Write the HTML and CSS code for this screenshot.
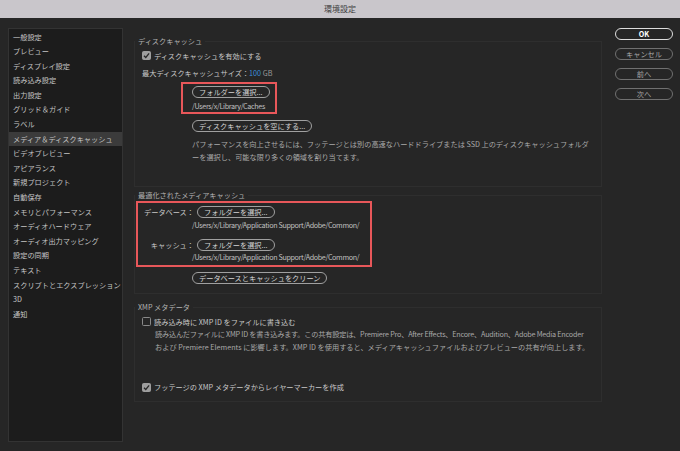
FILE: index.html
```html
<!DOCTYPE html>
<html lang="ja">
<head>
  <meta charset="UTF-8" />
  <title>環境設定</title>
  <link rel="stylesheet" href="styles.css">
</head>
<body>
  <div class="titlebar">環境設定</div>
  <div class="window">
    <ul class="sidebar">
      <li>一般設定</li>
      <li>プレビュー</li>
      <li>ディスプレイ設定</li>
      <li>読み込み設定</li>
      <li>出力設定</li>
      <li>グリッド＆ガイド</li>
      <li>ラベル</li>
      <li class="active">メディア＆ディスクキャッシュ</li>
      <li>ビデオプレビュー</li>
      <li>アピアランス</li>
      <li>新規プロジェクト</li>
      <li>自動保存</li>
      <li>メモリとパフォーマンス</li>
      <li>オーディオハードウェア</li>
      <li>オーディオ出力マッピング</li>
      <li>設定の同期</li>
      <li>テキスト</li>
      <li>スクリプトとエクスプレッション</li>
      <li>3D</li>
      <li>通知</li>
    </ul>

    <div class="main">
      <fieldset class="group disk">
        <legend>ディスクキャッシュ</legend>
        <label class="check-row">
          <span class="box checked"><svg viewBox="0 0 10 10" width="9" height="9"><path d="M2.2 5.2 L4.2 7.2 L7.9 2.6" fill="none" stroke="#262626" stroke-width="1.4"/></svg></span>
          ディスクキャッシュを有効にする
        </label>
        <div class="size-row">最大ディスクキャッシュサイズ：<span class="value">100</span> <span class="unit">GB</span></div>
        <div class="mark disk-mark">
          <button class="pill">フォルダーを選択...</button>
          <div class="path">/Users/x/Library/Caches</div>
        </div>
        <button class="pill indent empty">ディスクキャッシュを空にする...</button>
        <p class="note indent">パフォーマンスを向上させるには、フッテージとは別の高速なハードドライブまたは SSD 上のディスクキャッシュフォルダ<br>ーを選択し、可能な限り多くの領域を割り当てます。</p>
      </fieldset>

      <fieldset class="group media">
        <legend>最適化されたメディアキャッシュ</legend>
        <div class="mark media-mark">
          <div class="field">
            <span class="field-label">データベース：</span>
            <button class="pill">フォルダーを選択...</button>
          </div>
          <div class="path">/Users/x/Library/Application Support/Adobe/Common/</div>
          <div class="field second">
            <span class="field-label">キャッシュ：</span>
            <button class="pill">フォルダーを選択...</button>
          </div>
          <div class="path">/Users/x/Library/Application Support/Adobe/Common/</div>
        </div>
        <button class="pill clean">データベースとキャッシュをクリーン</button>
      </fieldset>

      <fieldset class="group xmp">
        <legend>XMP メタデータ</legend>
        <label class="check-row">
          <span class="box"></span>
          読み込み時に XMP ID をファイルに書き込む
        </label>
        <p class="note xmp-note">読み込んだファイルに XMP ID を書き込みます。この共有設定は、Premiere Pro、After Effects、Encore、Audition、Adobe Media Encoder<br>および Premiere Elements に影響します。XMP ID を使用すると、メディアキャッシュファイルおよびプレビューの共有が向上します。</p>
        <label class="check-row last">
          <span class="box checked"><svg viewBox="0 0 10 10" width="9" height="9"><path d="M2.2 5.2 L4.2 7.2 L7.9 2.6" fill="none" stroke="#262626" stroke-width="1.4"/></svg></span>
          フッテージの XMP メタデータからレイヤーマーカーを作成
        </label>
      </fieldset>
    </div>

    <div class="actions">
      <button class="pill action primary">OK</button>
      <button class="pill action">キャンセル</button>
      <button class="pill action">前へ</button>
      <button class="pill action">次へ</button>
    </div>
  </div>
</body>
</html>
```

FILE: styles.css
```css
body {
  margin: 0;
  background: #262626;
  font-family: "Noto Sans CJK JP", "Noto Sans", sans-serif;
  font-size: 7.2px;
  color: #c8c8c8;
  height: 451px;
  overflow: hidden;
}
.titlebar {
  height: 18px;
  line-height: 18px;
  background: #c9c6cb;
  color: #3e3e3e;
  text-align: center;
  font-size: 8px;
}
.window {
  display: flex;
  padding: 10px 7px 0 8px;
}
.sidebar {
  list-style: none;
  margin: 0;
  padding: 0.5px 0 0;
  width: 115px;
  height: 414px;
  box-sizing: border-box;
  background: #1c1c1c;
  border: 1px solid #333;
}
.sidebar li {
  height: 14.6px;
  line-height: 14.6px;
  padding-left: 4px;
  color: #c4c4c4;
  white-space: nowrap;
}
.sidebar li.active {
  background: #3b3b3b;
}
.main {
  width: 468px;
  margin-left: 11px;
}
.actions {
  width: 58px;
  margin-left: 13px;
  display: flex;
  flex-direction: column;
  gap: 8px;
}

/* groups */
.group {
  margin: 0;
  padding: 0;
  min-width: 0;
  border: 1px solid #2e2e2e;
}
.group legend {
  margin-left: 0;
  padding: 0 3px;
  height: 10px;
  line-height: 10px;
  color: #b2b2b2;
}
.disk { margin-top: 8px; padding-bottom: 22px; }
.media { margin-top: 3.5px; padding-bottom: 9px; }
.xmp { margin-top: 8px; padding-bottom: 8px; }

.check-row {
  display: flex;
  align-items: center;
  gap: 3px;
  height: 12px;
  margin: 3.5px 0 0 7px;
  color: #c8c8c8;
}
.xmp .check-row.last { margin-top: 28px; }
.box {
  width: 9px;
  height: 9px;
  box-sizing: border-box;
  border: 1px solid #8a8a8a;
  border-radius: 1.5px;
  display: flex;
}
.box.checked {
  background: #9e9e9e;
  border-color: #9e9e9e;
}
.box svg { margin: -1px; }
.size-row {
  height: 12px;
  line-height: 12px;
  margin: 5.5px 0 0 7px;
}
.value { color: #3a90dc; }
.unit { color: #9a9a9a; }

.mark {
  border: 2px solid #e8575a;
  box-sizing: border-box;
}
.disk-mark {
  width: 96px;
  margin: 3px 0 0 46px;
  padding: 2px 9px 0;
  height: 32px;
}
.path {
  height: 12px;
  line-height: 12px;
  margin-top: 2px;
  color: #c0c0c0;
  white-space: nowrap;
  letter-spacing: -0.35px;
}

.pill {
  display: flex;
  align-items: center;
  justify-content: center;
  height: 12px;
  padding: 0 6px;
  box-sizing: border-box;
  border: 1px solid #a0a0a0;
  border-radius: 7px;
  background: transparent;
  color: #d4d4d4;
  font: inherit;
  white-space: nowrap;
}
.indent { margin-left: 57px; }
.empty { margin-top: 6px; }
.note {
  margin-top: 5.5px;
  margin-bottom: 0;
  line-height: 13px;
  color: #a9a9a9;
  white-space: nowrap;
}

.media-mark {
  width: 236px;
  margin: 1px 0 0 1px;
  padding: 3px 0 2px;
}
.field {
  display: flex;
  align-items: center;
  gap: 3px;
}
.field.second { margin-top: 8px; }
.field-label {
  width: 56px;
  text-align: right;
  color: #c8c8c8;
}
.media-mark .path {
  margin: 1px 0 0 54px;
}
.media-mark .field.second + .path { margin-top: 0; }
.clean {
  margin: 5px 0 0 57px;
}

.xmp-note {
  margin: 0.75px 0 0 20px;
  line-height: 12.5px;
}
.xmp-note::first-line {
  letter-spacing: -0.22px;
}

.action {
  width: 58px;
  color: #a8a8a8;
  border-color: #707070;
}
.action.primary {
  color: #fff;
  font-weight: bold;
  border: 1.5px solid #dedede;
}
```
